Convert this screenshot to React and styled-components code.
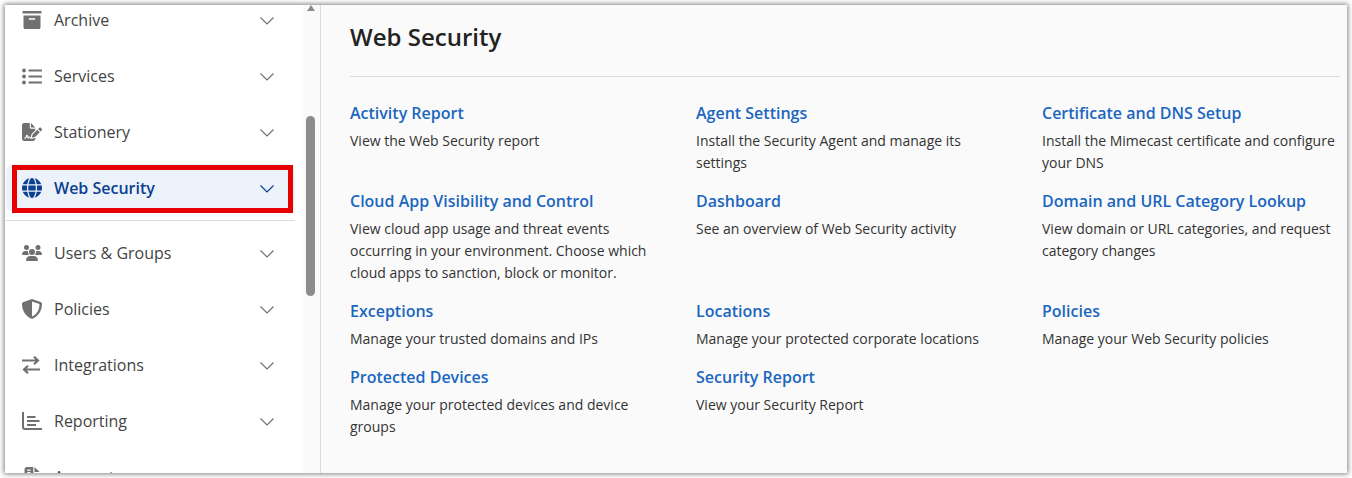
import React from "react";
import styled, { createGlobalStyle } from "styled-components";
import { FaFileSignature, FaGlobe, FaUsers, FaFileInvoice } from "react-icons/fa6";

const GlobalStyle = createGlobalStyle`
  html, body {
    margin: 0;
    padding: 0;
    background: #fff;
    overflow: hidden;
  }
  * {
    box-sizing: border-box;
  }
`;

const ArchiveIcon = () => (
  <svg viewBox="0 0 20 18" width="20" height="18" fill="currentColor">
    <rect x="0.5" y="0" width="19" height="2.6" rx="0.6" />
    <path
      fillRule="evenodd"
      d="M1.5 4.4H18.5V16.5A1.5 1.5 0 0 1 17 18H3A1.5 1.5 0 0 1 1.5 16.5ZM6.8 7.2V8.8H13.2V7.2Z"
    />
  </svg>
);

const ListIcon = () => (
  <svg viewBox="0 0 20 17" width="20" height="17" fill="currentColor">
    <circle cx="2" cy="2.5" r="1.9" />
    <circle cx="2" cy="8.5" r="1.9" />
    <circle cx="2" cy="14.5" r="1.9" />
    <rect x="6.5" y="1.5" width="13.5" height="2" rx="0.5" />
    <rect x="6.5" y="7.5" width="13.5" height="2" rx="0.5" />
    <rect x="6.5" y="13.5" width="13.5" height="2" rx="0.5" />
  </svg>
);

const ShieldIcon = () => (
  <svg viewBox="0 0 20 20" width="20" height="20" fill="currentColor">
    <path
      fillRule="evenodd"
      d="M10 0L18.5 3C19.5 3.3 20 4 20 5C20 11 17 17 10 20C3 17 0 11 0 5C0 4 0.5 3.3 1.5 3ZM10 2.5V17.5C15.5 15 17.5 10 17.5 5Z"
    />
  </svg>
);

const ExchangeIcon = () => (
  <svg viewBox="0 0 18 18" width="18" height="18" fill="none" stroke="currentColor" strokeWidth="2.2">
    <path d="M0 4.5H16M12 0.7L16 4.5L12 8.3" />
    <path d="M18 13.5H2M6 9.7L2 13.5L6 17.3" />
  </svg>
);

const ReportIcon = () => (
  <svg viewBox="0 0 20 18" width="20" height="18" fill="none" stroke="currentColor">
    <path d="M1 0V15A2 2 0 0 0 3 17H20" strokeWidth="2" />
    <path d="M5 5H13.5M5 9H17.5M5 13H14" strokeWidth="1.8" />
  </svg>
);

const navTop = [
  { label: "Archive", Icon: ArchiveIcon },
  { label: "Services", Icon: ListIcon },
  { label: "Stationery", Icon: FaFileSignature },
  { label: "Web Security", Icon: FaGlobe, active: true }
];

const navBottom = [
  { label: "Users & Groups", Icon: FaUsers },
  { label: "Policies", Icon: ShieldIcon },
  { label: "Integrations", Icon: ExchangeIcon },
  { label: "Reporting", Icon: ReportIcon },
  { label: "Account", Icon: FaFileInvoice }
];

const links = [
  { title: "Activity Report", text: "View the Web Security report" },
  { title: "Agent Settings", text: "Install the Security Agent and manage its settings" },
  { title: "Certificate and DNS Setup", text: "Install the Mimecast certificate and configure your DNS" },
  {
    title: "Cloud App Visibility and Control",
    text: "View cloud app usage and threat events occurring in your environment. Choose which cloud apps to sanction, block or monitor."
  },
  { title: "Dashboard", text: "See an overview of Web Security activity" },
  { title: "Domain and URL Category Lookup", text: "View domain or URL categories, and request category changes" },
  { title: "Exceptions", text: "Manage your trusted domains and IPs" },
  { title: "Locations", text: "Manage your protected corporate locations" },
  { title: "Policies", text: "Manage your Web Security policies" },
  { title: "Protected Devices", text: "Manage your protected devices and device groups" },
  { title: "Security Report", text: "View your Security Report" }
];

const Chevron = () => (
  <ChevronSvg viewBox="0 0 14 8" fill="none">
    <polyline points="0.5,0.5 7,7 13.5,0.5" stroke="currentColor" strokeWidth="1.2" />
  </ChevronSvg>
);

const NavRow = ({ label, Icon, active }) => (
  <NavItem $active={active}>
    <IconBox>
      <Icon />
    </IconBox>
    <NavLabel $active={active}>{label}</NavLabel>
    <Chevron />
    {active && <Highlight />}
  </NavItem>
);

export default function App() {
  return (
    <Page>
      <GlobalStyle />
      <Frame>
        <Sidebar>
          <NavList>
            {navTop.map(item => (
              <NavRow key={item.label} {...item} />
            ))}
            <Divider />
            {navBottom.map(item => (
              <NavRow key={item.label} {...item} />
            ))}
          </NavList>
          <Track>
            <ArrowUp />
            <Thumb />
          </Track>
        </Sidebar>
        <Main>
          <Title>Web Security</Title>
          <LinkGrid>
            {links.map(link => (
              <Card key={link.title}>
                <CardTitle href="#">{link.title}</CardTitle>
                <CardText>{link.text}</CardText>
              </Card>
            ))}
          </LinkGrid>
        </Main>
      </Frame>
    </Page>
  );
}

const Page = styled.div`
  width: 1352px;
  height: 478px;
  padding: 5px;
  font-family: "Open Sans", sans-serif;
`;

const Frame = styled.div`
  display: flex;
  height: 468px;
  background: #fff;
  overflow: hidden;
  box-shadow: 0 0 5px 1px rgba(0, 0, 0, 0.5);
`;

const Sidebar = styled.aside`
  display: flex;
  flex: 0 0 316px;
  border-right: 1px solid #dcdcdc;
  overflow: hidden;
`;

const NavList = styled.nav`
  display: flex;
  flex-direction: column;
  flex: 0 0 298px;
  gap: 8px;
  margin-top: -9px;
  padding: 0 8px 0 1px;
`;

const NavItem = styled.div`
  position: relative;
  display: flex;
  flex: 0 0 48px;
  align-items: center;
  padding: 0 21px 0 16px;
  border-radius: 8px;
  background: ${props => (props.$active ? "#ebf2fa" : "transparent")};
  color: ${props => (props.$active ? "#0b3f8f" : "#707070")};
`;

const IconBox = styled.span`
  display: flex;
  flex: 0 0 32px;
  align-items: center;
  height: 20px;

  svg[height="1em"] {
    width: auto;
    height: 20px;
  }
`;

const NavLabel = styled.span`
  flex: 1;
  color: ${props => (props.$active ? "#0b3f8f" : "#444")};
  font-size: 16px;
  font-weight: ${props => (props.$active ? 600 : 400)};
  line-height: 24px;
`;

const ChevronSvg = styled.svg`
  flex: 0 0 14px;
  width: 14px;
  height: 8px;
  margin-top: 1px;
`;

const Highlight = styled.span`
  position: absolute;
  top: 1px;
  bottom: -1px;
  left: 6px;
  right: 2px;
  border: 5px solid #e60000;
`;

const Divider = styled.hr`
  flex: 0 0 1px;
  width: 100%;
  margin: 0;
  border: 0;
  background: #dcdcdc;
`;

const Track = styled.div`
  display: flex;
  flex-direction: column;
  align-items: center;
  flex: 1;
  padding-right: 2px;
  background: #fafafa;
`;

const ArrowUp = styled.span`
  width: 0;
  height: 0;
  border-left: 4.5px solid transparent;
  border-right: 4.5px solid transparent;
  border-bottom: 6px solid #8c8c8c;
`;

const Thumb = styled.span`
  width: 9px;
  height: 180px;
  margin-top: 105px;
  border-radius: 5px;
  background: #8c8c8c;
`;

const Main = styled.main`
  flex: 1;
  padding: 0 7px 0 29px;
  background: #fafafa;
`;

const Title = styled.h1`
  height: 72px;
  margin: 0 0 25px;
  border-bottom: 1px solid #dcdcdc;
  color: #222;
  font-size: 24px;
  font-weight: 600;
  line-height: 64px;
`;

const LinkGrid = styled.div`
  display: grid;
  grid-template-columns: 346px 346px 1fr;
  row-gap: 16px;
`;

const Card = styled.div`
  display: flex;
  flex-direction: column;
  gap: 6px;
`;

const CardTitle = styled.a`
  color: #1b66c0;
  font-size: 16px;
  font-weight: 600;
  line-height: 22px;
  text-decoration: none;
`;

const CardText = styled.p`
  max-width: 310px;
  margin: 0;
  color: #333;
  font-size: 14px;
  line-height: 22px;
`;
